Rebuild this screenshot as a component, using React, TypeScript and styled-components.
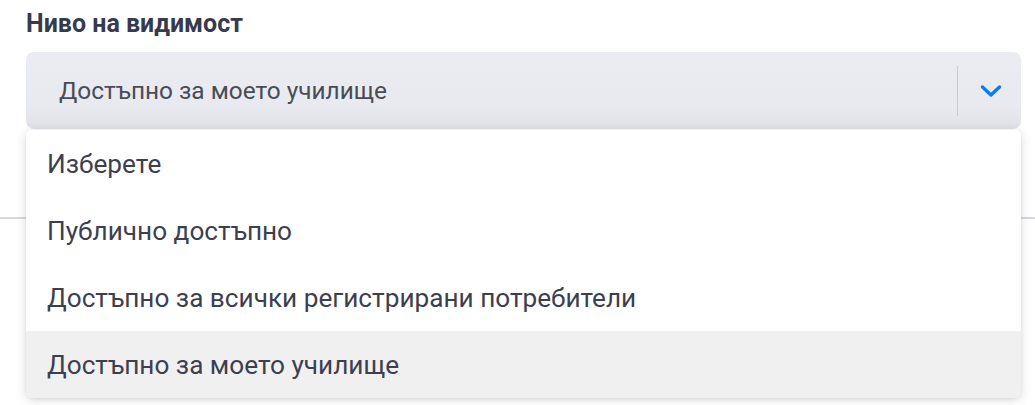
import React from "react";
import styled, { createGlobalStyle } from "styled-components";

const Global = createGlobalStyle`
  html, body { margin: 0; padding: 0; background: #ffffff; }
  body { font-family: Roboto, "Noto Sans", sans-serif; }
  * { box-sizing: border-box; }
`;

const Page = styled.div`
  width: 1035px;
  height: 405px;
  overflow: hidden;
  position: relative;
`;

const Field = styled.div`
  padding: 0 14px 0 26px;
  display: flex;
  flex-direction: column;
`;

const Label = styled.div`
  margin-top: 8px;
  height: 44px;
  font-size: 25px;
  font-weight: 700;
  color: #373a4d;
  line-height: 32px;
`;

const SelectWrap = styled.div`
  position: relative;
`;

const SelectBox = styled.div`
  height: 77px;
  border-radius: 8px;
  background: linear-gradient(#ebecf1 0%, #e9eaef 70%, #e0e2e7 100%);
  display: flex;
  align-items: center;
  padding-left: 33px;
`;

const Value = styled.div`
  flex: 1;
  font-size: 24.4px;
  color: #4a4b55;
`;

const Divider = styled.div`
  width: 1px;
  height: 50px;
  background: #c9cacf;
`;

const Toggle = styled.div`
  width: 63px;
  display: flex;
  align-items: center;
  justify-content: center;
  padding-left: 2px;
`;

const Menu = styled.ul`
  position: absolute;
  left: 0;
  right: 0;
  top: 78px;
  margin: 0;
  padding: 0;
  list-style: none;
  background: #ffffff;
  border-radius: 6px;
  overflow: hidden;
  box-shadow: 0 2px 12px rgba(0, 0, 0, 0.14), 0 1px 3px rgba(0, 0, 0, 0.06);
  z-index: 2;
`;

const Item = styled.li<{ $selected?: boolean }>`
  height: 67px;
  display: flex;
  align-items: center;
  padding-left: 21px;
  font-size: 26.2px;
  color: #3d3f4f;
  background: ${(p) => (p.$selected ? "#f0f0f0" : "#ffffff")};
`;

const Rule = styled.hr`
  margin: 88px 0 0 0;
  border: none;
  height: 2px;
  background: #d6dade;
`;

const options = [
  "Изберете",
  "Публично достъпно",
  "Достъпно за всички регистрирани потребители",
  "Достъпно за моето училище",
];

export default function App() {
  const selected = options[3];
  return (
    <Page>
      <Global />
      <Field>
        <Label>Ниво на видимост</Label>
        <SelectWrap>
          <SelectBox>
            <Value>{selected}</Value>
            <Divider />
            <Toggle>
              <svg width="22" height="14" viewBox="0 0 22 14" fill="none">
                <path
                  d="M2.5 3 L11 11 L19.5 3"
                  stroke="#0b7bf5"
                  strokeWidth="3.4"
                  strokeLinecap="round"
                  strokeLinejoin="round"
                />
              </svg>
            </Toggle>
          </SelectBox>
          <Menu>
            {options.map((o) => (
              <Item key={o} $selected={o === selected}>
                {o}
              </Item>
            ))}
          </Menu>
        </SelectWrap>
      </Field>
      <Rule />
    </Page>
  );
}
